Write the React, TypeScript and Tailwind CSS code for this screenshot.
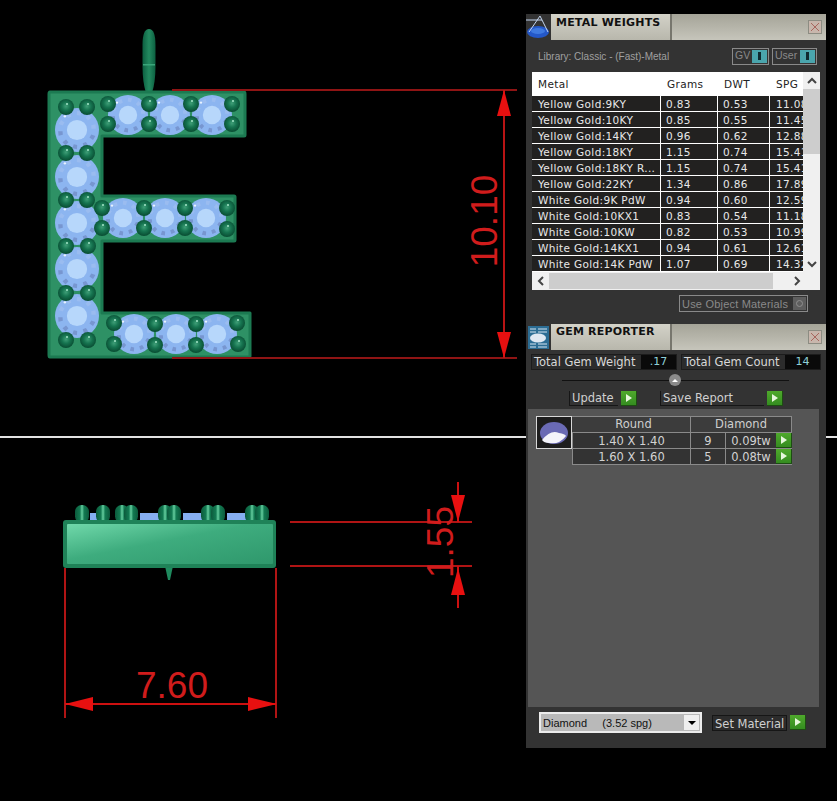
const SANS = 'font-["DejaVu_Sans",sans-serif]'

const metals = [
  ['Yellow Gold:9KY', '0.83', '0.53', '11.08'],
  ['Yellow Gold:10KY', '0.85', '0.55', '11.45'],
  ['Yellow Gold:14KY', '0.96', '0.62', '12.88'],
  ['Yellow Gold:18KY', '1.15', '0.74', '15.41'],
  ['Yellow Gold:18KY R...', '1.15', '0.74', '15.41'],
  ['Yellow Gold:22KY', '1.34', '0.86', '17.89'],
  ['White Gold:9K PdW', '0.94', '0.60', '12.59'],
  ['White Gold:10KX1', '0.83', '0.54', '11.18'],
  ['White Gold:10KW', '0.82', '0.53', '10.99'],
  ['White Gold:14KX1', '0.94', '0.61', '12.61'],
  ['White Gold:14K PdW', '1.07', '0.69', '14.32'],
]

const gems = [
  ['1.40 X 1.40', '9', '0.09tw'],
  ['1.60 X 1.60', '5', '0.08tw'],
]

const bigGems = [[77, 130], [77, 177], [77, 223], [77, 269], [77, 316]]
const smallGems = [
  [128, 115], [170, 115], [212, 115],
  [123, 218], [165, 218], [206, 218],
  [134, 334], [176, 334], [217, 334],
]
const beads = [
  [66, 107], [87, 107], [66, 153], [87, 153], [66, 200], [87, 200],
  [66, 246], [88, 246], [66, 293], [88, 293], [66, 340], [88, 340],
  [108, 104], [108, 124], [149, 104], [149, 124], [191, 104], [191, 124], [232, 104], [232, 124],
  [102, 208], [102, 228], [144, 208], [144, 228], [185, 208], [185, 228], [227, 208], [227, 229],
  [114, 323], [114, 344], [155, 324], [155, 345], [196, 324], [196, 345], [237, 323], [238, 344],
]
const prongs = [82, 103, 122, 131, 165, 174, 208, 218, 252, 262]

function Gem({ x, y, r }: { x: number; y: number; r: number }) {
  const facets = Array.from({ length: 10 }, (_, i) => (i * Math.PI) / 5 + 0.2)
  const pt = (a: number, k: number) => `${x + Math.cos(a) * r * k} ${y + Math.sin(a) * r * k}`
  return (
    <g>
      <circle cx={x} cy={y} r={r} fill="#8cb5f0" />
      {facets.map((a, i) => (
        <path
          key={i}
          d={`M${pt(a + 0.1, 0.68)}L${pt(a + 0.34, 0.66)}L${pt(a + 0.36, 0.86)}L${pt(a + 0.12, 0.88)}Z`}
          fill={Math.sin(a) > -0.1 ? '#7796d0' : '#9abcf0'}
        />
      ))}
      <circle cx={x} cy={y} r={r * 0.46} fill="#b7d7fb" />
      <circle cx={x - r * 0.55} cy={y - r * 0.62} r="1.2" fill="#e8f2ff" />
    </g>
  )
}

function Drawing() {
  return (
    <svg width="526" height="801" viewBox="0 0 526 801" className="block shrink-0">
      <defs>
        <radialGradient id="bead" cx="0.5" cy="0.45" r="0.58">
          <stop offset="0" stopColor="#3f9f78" />
          <stop offset="0.45" stopColor="#167450" />
          <stop offset="1" stopColor="#07482f" />
        </radialGradient>
        <linearGradient id="side" x1="0" y1="0" x2="1" y2="1">
          <stop offset="0" stopColor="#70d8aa" />
          <stop offset="0.45" stopColor="#3eac7e" />
          <stop offset="1" stopColor="#2f986c" />
        </linearGradient>
        <linearGradient id="bail" x1="0" y1="0" x2="1" y2="0">
          <stop offset="0" stopColor="#0c5f40" />
          <stop offset="0.5" stopColor="#238a60" />
          <stop offset="1" stopColor="#0c5f40" />
        </linearGradient>
        <linearGradient id="prong" x1="0" y1="0" x2="1" y2="0">
          <stop offset="0" stopColor="#0c5a3c" />
          <stop offset="0.35" stopColor="#137a52" />
          <stop offset="0.5" stopColor="#66cfa0" />
          <stop offset="0.65" stopColor="#137a52" />
          <stop offset="1" stopColor="#0c5a3c" />
        </linearGradient>
      </defs>

      <rect x="0" y="436" width="526" height="2" fill="#e2e2e2" />

      <path d="M149 29Q155.5 29 155.5 45V66Q155.5 82 152 93H146Q142.5 82 142.5 66V45Q142.5 29 149 29Z" fill="url(#bail)" />
      <rect x="143" y="64" width="12" height="1.5" fill="#3aa67a" />

      <path
        d="M50 92H244Q245 92 245 94V135Q245 136 244 136H102V196H234Q235 196 235 197V240Q235 241 234 241H102V313H250V356Q250 357 248 357H50Q49 357 49 355V94Q49 92 50 92Z"
        fill="#2e9165"
        stroke="#1c7a52"
        strokeWidth="3"
        strokeLinejoin="round"
      />
      {bigGems.map(([x, y]) => <Gem key={`${x}-${y}`} x={x} y={y} r={22} />)}
      {smallGems.map(([x, y]) => <Gem key={`${x}-${y}`} x={x} y={y} r={20} />)}
      {beads.map(([x, y]) => (
        <g key={`${x}-${y}`}>
          <circle cx={x} cy={y} r="8" fill="url(#bead)" />
          <circle cx={x + 1} cy={y - 3} r="1" fill="#a5e6c8" />
        </g>
      ))}

      <rect x="172" y="89" width="345" height="2" fill="#8f1414" />
      <rect x="172" y="357" width="345" height="2" fill="#8f1414" />
      <rect x="503" y="90" width="2" height="268" fill="#b81414" />
      <g fill="#e81010">
        <path d="M504 90L511 116H497Z" />
        <path d="M504 358L511 332H497Z" />
      </g>
      <text
        x="497"
        y="221"
        transform="rotate(-90 497 221)"
        textAnchor="middle"
        fontFamily="'Liberation Sans', sans-serif"
        fontSize="37"
        fill="#d01c1c"
      >
        10.10
      </text>

      <path d="M165 566H173L170 580H168Z" fill="#1f8a5e" />
      <rect x="90" y="513" width="8" height="8" fill="#86aef0" />
      <rect x="140" y="513" width="25" height="8" fill="#86aef0" />
      <rect x="183" y="513" width="28" height="8" fill="#86aef0" />
      <rect x="227" y="513" width="26" height="8" fill="#86aef0" />
      {prongs.map((x) => (
        <rect key={x} x={x - 7} y="505" width="14" height="18" rx="6.5" fill="url(#prong)" />
      ))}
      <rect x="63" y="520" width="213" height="48" rx="3" fill="#1f8258" />
      <rect x="67" y="524" width="206" height="40" rx="1" fill="url(#side)" />

      <rect x="290" y="521" width="182" height="2" fill="#b01414" />
      <rect x="290" y="565" width="182" height="2" fill="#b01414" />
      <rect x="457" y="482" width="2" height="40" fill="#cc1010" />
      <rect x="457" y="566" width="2" height="42" fill="#cc1010" />
      <rect x="64" y="568" width="2" height="150" fill="#b01414" />
      <rect x="275" y="568" width="2" height="150" fill="#b01414" />
      <rect x="65" y="703" width="211" height="2" fill="#cc1010" />
      <g fill="#e81010">
        <path d="M458 522L451 495H465Z" />
        <path d="M458 568L451 595H465Z" />
        <path d="M65 704L93 697V711Z" />
        <path d="M277 704L248 697V711Z" />
      </g>
      <text
        x="453"
        y="542"
        transform="rotate(-90 453 542)"
        textAnchor="middle"
        fontFamily="'Liberation Sans', sans-serif"
        fontSize="37"
        fill="#d01c1c"
      >
        1.55
      </text>
      <text
        x="172"
        y="698"
        textAnchor="middle"
        fontFamily="'Liberation Sans', sans-serif"
        fontSize="37"
        fill="#d01c1c"
      >
        7.60
      </text>
    </svg>
  )
}

function GreenArrow() {
  return (
    <span className="flex h-[15px] w-[16px] shrink-0 items-center justify-center border-r border-b border-[#1d4d12] bg-gradient-to-b from-[#4fa92c] to-[#348c20]">
      <svg width="6" height="8" viewBox="0 0 6 8"><path d="M0 0L6 4L0 8Z" fill="#e6f7dc" /></svg>
    </span>
  )
}

function TitleBar({ title, icon, textTop }: { title: string; icon: React.ReactNode; textTop: string }) {
  return (
    <div className="flex h-[26px] items-stretch bg-[#b9b8ae]">
      <div className="flex w-[25px] items-center justify-center bg-[#333333]">{icon}</div>
      <div className={`flex w-[121px] items-start border-r-2 border-[#77766d] bg-gradient-to-b from-[#d3d2c8] to-[#b8b7ac] pl-[5px] font-['DejaVu_Sans',sans-serif] text-[11px] leading-[14px] font-bold tracking-[0.2px] text-[#111111] ${textTop}`}>
        {title}
      </div>
      <div className="flex flex-1 items-center justify-end bg-gradient-to-b from-[#a5a498] to-[#c6c5bb] pr-[4px]">
        <span className="flex h-[14px] w-[14px] items-center justify-center border border-[#8c8c82] bg-[#c8b6ac]">
          <svg width="10" height="10" viewBox="0 0 10 10"><path d="M1 1L9 9M9 1L1 9" stroke="#a8675f" strokeWidth="1" /></svg>
        </span>
      </div>
    </div>
  )
}

function Toggle({ label, width }: { label: string; width: string }) {
  return (
    <div className={`flex h-[17px] items-center justify-between border border-[#8a8a8a] pr-px pl-[2px] font-['Liberation_Sans',sans-serif] text-[10.5px] text-[#8a8a8a] ${width}`}>
      <span>{label}</span>
      <span className="flex h-[13px] w-[15px] items-center justify-center bg-[#4aa5ad]">
        <span className="h-[8px] w-[3px] bg-[#0f2a30]" />
      </span>
    </div>
  )
}

function ScrollChevron({ d }: { d: string }) {
  return (
    <svg width="10" height="10" viewBox="0 0 10 10" className="block">
      <path d={d} fill="none" stroke="#444444" strokeWidth="2" />
    </svg>
  )
}

function MetalWeights() {
  return (
    <div className="h-[308px]">
      <TitleBar
        title="METAL WEIGHTS"
        textTop="pt-[2px]"
        icon={
          <svg width="25" height="26" viewBox="0 0 25 26">
            <ellipse cx="12" cy="18" rx="11" ry="6" fill="#2458c8" />
            <ellipse cx="12" cy="17" rx="7" ry="3" fill="#3f7ae0" />
            <path d="M14 2L3 18M14 2L22 18M0 6H16" stroke="#c4d6f0" strokeWidth="1" fill="none" />
          </svg>
        }
      />
      <div className="flex h-[32px] items-center justify-between pr-[9px] pl-[12px] text-[10px] text-[#a0a0a0]">
        <span className="font-['Liberation_Sans',sans-serif]">Library: Classic - (Fast)-Metal</span>
        <div className="flex gap-[3px]">
          <Toggle label="GV" width="w-[37px]" />
          <Toggle label="User" width="w-[45px]" />
        </div>
      </div>
      <div className={`mx-[6px] h-[218px] w-[288px] bg-[#f0f0f0] ${SANS}`}>
        <div className="flex h-[200px]">
          <div className="h-[200px] w-[271px] overflow-hidden bg-white">
            <div className="flex h-[24px] items-center bg-white pt-[2px] text-[10.5px] tracking-[0.35px] text-[#222222]">
              <span className="w-[129px] pl-[6px]">Metal</span>
              <span className="w-[57px] pl-[6px]">Grams</span>
              <span className="w-[52px] pl-[6px]">DWT</span>
              <span className="pl-[6px]">SPG</span>
            </div>
            {metals.map((row) => (
              <div key={row[0]} className="mb-px flex h-[15px] items-stretch gap-px text-[10.5px] leading-[14px] tracking-[0.35px] text-[#e8e8e8]">
                <span className="w-[128px] overflow-hidden bg-[#222120] pt-px pl-[6px] whitespace-nowrap">{row[0]}</span>
                <span className="w-[56px] bg-[#222120] pt-px pl-[5px]">{row[1]}</span>
                <span className="w-[51px] bg-[#222120] pt-px pl-[5px]">{row[2]}</span>
                <span className="flex-1 overflow-hidden bg-[#222120] pt-px pl-[6px] whitespace-nowrap">{row[3]}</span>
              </div>
            ))}
          </div>
          <div className="flex w-[17px] flex-col items-center justify-between">
            <div className="flex h-[17px] items-center"><ScrollChevron d="M1 7L5 3L9 7" /></div>
            <div className="mb-auto h-[65px] w-full bg-[#cdcdcd]" />
            <div className="flex h-[17px] items-center"><ScrollChevron d="M1 3L5 7L9 3" /></div>
          </div>
        </div>
        <div className="flex h-[18px] items-center">
          <div className="flex w-[17px] justify-center"><ScrollChevron d="M7 1L3 5L7 9" /></div>
          <div className="h-[16px] w-[224px] bg-[#cdcdcd]" />
          <div className="flex flex-1 justify-center"><ScrollChevron d="M3 1L7 5L3 9" /></div>
        </div>
      </div>
      <div className="mt-[5px] mr-[18px] ml-auto flex h-[17px] w-[129px] items-center justify-between border border-[#8a8a8a] pr-px pl-[2px] font-['Liberation_Sans',sans-serif] text-[11px] tracking-[0.2px] text-[#8a8a8a]">
        <span className="pt-px">Use Object Materials</span>
        <span className="flex h-[13px] w-[13px] items-center justify-center bg-[#5e5e5e]">
          <span className="h-[7px] w-[7px] rounded-full border border-[#8f8f8f]" />
        </span>
      </div>
    </div>
  )
}

function TotalBox({ label, value, width }: { label: string; value: string; width: string }) {
  return (
    <div className={`flex h-[16px] items-center border border-[#1c1c1c] bg-[#2c2c2c] pl-[2px] text-[11.5px] text-[#d8d8d8] ${width}`}>
      <span className="flex-1 pt-px">{label}</span>
      <span className="flex h-full w-[35px] items-center justify-center bg-[#0a0a0a] pt-px text-[11px] text-[#8fd0d8]">{value}</span>
    </div>
  )
}

function GemRow({ size, count, weight }: { size: string; count: string; weight: string }) {
  return (
    <div className="flex h-[16px] items-stretch border-b border-l border-[#8a8a8a] text-[11.5px] leading-[14px] text-[#d2d2d2]">
      <span className="w-[118px] border-r border-[#8a8a8a] bg-[#333333] pt-px text-center">{size}</span>
      <span className="w-[35px] border-r border-[#8a8a8a] bg-[#333333] pt-px text-center">{count}</span>
      <span className="w-[50px] bg-[#333333] pt-px text-center">{weight}</span>
      <GreenArrow />
    </div>
  )
}

function GemReporter() {
  return (
    <div className={`flex flex-1 flex-col ${SANS}`}>
      <TitleBar
        title="GEM REPORTER"
        textTop="pt-px"
        icon={
          <svg width="21" height="23" viewBox="0 0 21 23">
            <rect width="21" height="23" fill="#2c6d94" />
            <path d="M2 3H8M10 3H19M2 6H8M10 6H19M2 18H8M10 18H19M2 21H8M10 21H19" stroke="#d5e6f2" strokeWidth="1" />
            <ellipse cx="10" cy="12" rx="8" ry="4.5" fill="#dfe8f2" />
          </svg>
        }
      />
      <div className="mt-[4px] flex justify-between px-[5px]">
        <TotalBox label="Total Gem Weight" value=".17" width="w-[146px]" />
        <TotalBox label="Total Gem Count" value="14" width="w-[140px]" />
      </div>
      <div className="relative mt-[3px] mr-[37px] ml-[36px] flex h-[14px] items-center">
        <div className="h-px w-full bg-[#111111]" />
        <span className="absolute left-[107px] flex h-[12px] w-[12px] items-center justify-center rounded-full bg-[#8a8a8a]">
          <span className="h-0 w-0 border-x-[3px] border-b-[3px] border-x-transparent border-b-white" />
        </span>
      </div>
      <div className="mt-[3px] flex h-[16px] items-center pl-[43px] text-[11.5px] leading-[14px] text-[#d0d0d0]">
        <div className="flex w-[91px] gap-[3px]">
          <span className="h-[15px] w-[49px] border-b border-l border-[#161616] pl-[2px]">Update</span>
          <GreenArrow />
        </div>
        <div className="flex gap-[3px]">
          <span className="h-[15px] w-[104px] border-b border-l border-[#161616] pl-[2px]">Save Report</span>
          <GreenArrow />
        </div>
      </div>
      <div className="mt-[3px] mr-[7px] ml-[2px] flex h-[298px] items-start bg-[#555555] pt-[7px] pl-[8px]">
        <div className="flex h-[33px] w-[36px] items-center justify-center border border-[#d8d8d8] bg-[#1d1d1d]">
          <svg width="30" height="24" viewBox="0 0 30 24">
            <ellipse cx="15" cy="12" rx="14" ry="11" fill="#6a6ab4" />
            <path d="M3 19Q12 8 20 12Q26 13 27 15Q20 24 10 22Q5 22 3 19Z" fill="#f4f4fa" />
          </svg>
        </div>
        <div className="w-[220px]">
          <div className="flex h-[17px] items-stretch border-y border-r border-[#8a8a8a] bg-[#3c3c3c] text-[11.5px] leading-[15px] text-[#cfcfcf]">
            <span className="w-[119px] border-r border-[#8a8a8a] pl-[5px] text-center">Round</span>
            <span className="flex-1 text-center">Diamond</span>
          </div>
          {gems.map(([size, count, weight]) => (
            <GemRow key={size} size={size} count={count} weight={weight} />
          ))}
        </div>
      </div>
      <div className="mt-[5px] flex items-center pl-[13px]">
        <div className="flex h-[21px] w-[163px] items-center justify-between border-2 border-[#ececec] bg-[#b9b9b9] pr-px pl-[2px] text-[#111111]">
          <span className="pt-px font-['Liberation_Sans',sans-serif] text-[11px] whitespace-pre">Diamond     (3.52 spg)</span>
          <span className="flex h-[15px] w-[15px] items-center justify-center bg-[#efefef]">
            <span className="h-0 w-0 border-x-[4px] border-t-[4px] border-x-transparent border-t-black" />
          </span>
        </div>
        <div className="ml-[10px] flex gap-[3px]">
          <span className="h-[16px] w-[75px] border border-[#161616] bg-[#2c2c2c] pl-[2px] text-[11.5px] leading-[16px] whitespace-nowrap text-[#d0d0d0]">Set Material</span>
          <GreenArrow />
        </div>
      </div>
    </div>
  )
}

export default function App() {
  return (
    <div className="flex h-[801px] w-[837px] overflow-hidden bg-black">
      <Drawing />
      <div className="mt-[14px] flex h-[734px] w-[300px] shrink-0 flex-col bg-[#333333] font-['DejaVu_Sans',sans-serif]">
        <MetalWeights />
        <div className="h-[2px]" />
        <GemReporter />
      </div>
      <div className="mt-[436px] h-[2px] flex-1 bg-[#e2e2e2]" />
    </div>
  )
}
